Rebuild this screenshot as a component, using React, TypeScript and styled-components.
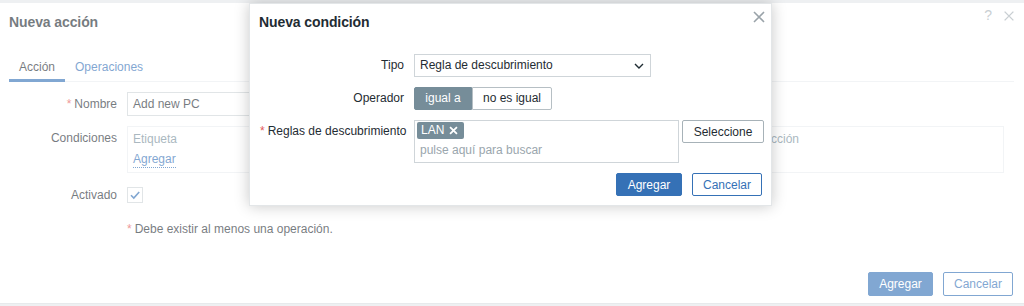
import React from 'react';
import styled, { createGlobalStyle } from 'styled-components';

const BLUE = '#3571b6';

const GlobalStyle = createGlobalStyle`
  html, body {
    margin: 0;
    padding: 0;
    background: #e4e7ea;
    font-family: "Liberation Sans", Arial, sans-serif;
    font-size: 12px;
    color: #1f2c33;
  }
`;

const Page = styled.div`
  position: relative;
  width: 1024px;
  height: 306px;
  overflow: hidden;
`;

const Dialog = styled.div`
  margin-top: 3px;
  height: 300px;
  background: #fff;
  border-bottom: 1px solid #d9dde0;
  display: flex;
  flex-direction: column;
`;

const DialogHeader = styled.div`
  height: 39px;
  display: flex;
  align-items: center;
  padding: 0 8px 0 9px;
`;

const Title = styled.h4`
  margin: 0;
  font-size: 14px;
  font-weight: bold;
  line-height: 17px;
  flex: 1;
  color: #1f2c33;
  letter-spacing: -0.1px;
`;

const HeaderIcon = styled.span<{ $gap: number; $top: number }>`
  color: #a9b2b8;
  font-size: 14px;
  margin-left: ${p => p.$gap}px;
  align-self: flex-start;
  margin-top: ${p => p.$top}px;
  display: flex;
`;

const TabList = styled.ul`
  list-style: none;
  display: flex;
  margin: 13px 10px 0 9px;
  padding: 0;
  border-bottom: 1px solid #ebeef0;
`;

const Tab = styled.li<{ $active?: boolean }>`
  padding: 5px 10px 4px;
  line-height: 15px;
  margin-bottom: -1px;
  color: ${p => (p.$active ? '#1f2c33' : BLUE)};
  border-bottom: 3px solid ${p => (p.$active ? BLUE : 'transparent')};
`;

const Form = styled.div<{ $labelWidth: number }>`
  display: grid;
  grid-template-columns: ${p => p.$labelWidth}px 1fr;
  row-gap: 10px;
  align-items: start;
`;

const OuterForm = styled(Form)`
  padding: 10px 20px 0 0;
`;

const Label = styled.label<{ $line?: number }>`
  text-align: right;
  padding-right: 10px;
  line-height: ${p => p.$line ?? 24}px;
  white-space: nowrap;
`;

const Required = styled.span`
  color: #e45959;
  margin-right: 3px;
`;

const TextInput = styled.div<{ $width: number }>`
  box-sizing: border-box;
  width: ${p => p.$width}px;
  height: 24px;
  border: 1px solid #cfd5d9;
  padding: 0 5px;
  line-height: 22px;
  background: #fff;
`;

const ConditionsBox = styled.div`
  border: 1px solid #ebeef0;
  padding: 3px 5px 4px;
`;

const ConditionsHead = styled.div`
  display: grid;
  grid-template-columns: 1fr 235px;
  line-height: 18px;
  color: #768d99;
`;

const DottedLink = styled.span`
  display: inline-block;
  margin-top: 3px;
  color: ${BLUE};
  border-bottom: 1px dotted ${BLUE};
  line-height: 16px;
`;

const CheckRow = styled.div`
  height: 24px;
  display: flex;
  align-items: center;
`;

const CheckBox = styled.span`
  box-sizing: border-box;
  width: 16px;
  height: 16px;
  border: 1px solid #cfd5d9;
  display: flex;
  align-items: center;
  justify-content: center;
`;

const Note = styled.div`
  line-height: 24px;
`;

const Footer = styled.div<{ $bottom: number }>`
  margin-top: auto;
  display: flex;
  justify-content: flex-end;
  gap: 10px;
  padding: 0 11px ${p => p.$bottom}px 0;
`;

const Button = styled.button<{ $primary?: boolean; $width: number; $height?: number }>`
  box-sizing: border-box;
  width: ${p => p.$width}px;
  height: ${p => p.$height ?? 24}px;
  font-family: inherit;
  font-size: 12px;
  padding: 0;
  border-radius: 2px;
  border: 1px solid ${BLUE};
  background: ${p => (p.$primary ? BLUE : '#fff')};
  color: ${p => (p.$primary ? '#fff' : BLUE)};
`;

const GrayButton = styled(Button)`
  border-color: #a7b2b8;
  color: #1f2c33;
`;

const Dim = styled.div`
  position: absolute;
  inset: 0;
  background: rgba(255, 255, 255, 0.38);
`;

const Modal = styled.div`
  position: absolute;
  left: 249px;
  top: 3px;
  width: 523px;
  height: 203px;
  box-sizing: border-box;
  background: #fff;
  border: 1px solid #e3e6e8;
  box-shadow: 0 0 14px rgba(0, 0, 0, 0.22);
  display: flex;
  flex-direction: column;
`;

const ModalHeader = styled.div`
  padding: 10px 10px 0 9px;
  height: 38px;
  box-sizing: border-box;
`;

const CloseButton = styled.span`
  position: absolute;
  top: 5px;
  right: 4px;
  display: flex;
`;

const ModalForm = styled(Form)`
  padding: 12px 10px 0;
`;

const Select = styled(TextInput)`
  height: 23px;
  line-height: 21px;
  display: flex;
  justify-content: space-between;
  align-items: center;
  padding-right: 6px;
`;

const RadioGroup = styled.div`
  display: flex;
  height: 23px;
`;

const Radio = styled.span<{ $checked?: boolean; $width: number }>`
  box-sizing: border-box;
  width: ${p => p.$width}px;
  height: 23px;
  line-height: 21px;
  text-align: center;
  border: 1px solid ${p => (p.$checked ? '#768d99' : '#b6bfc4')};
  background: ${p => (p.$checked ? '#768d99' : '#fff')};
  color: ${p => (p.$checked ? '#fff' : '#1f2c33')};
  border-radius: ${p => (p.$checked ? '2px 0 0 2px' : '0 2px 2px 0')};
`;

const MultiRow = styled.div`
  display: flex;
  gap: 3px;
  align-items: flex-start;
`;

const MultiSelect = styled.div`
  box-sizing: border-box;
  width: 265px;
  height: 43px;
  border: 1px solid #cfd5d9;
  padding: 1px 2px;
`;

const Tag = styled.span`
  display: inline-flex;
  align-items: center;
  gap: 4px;
  height: 17px;
  padding: 0 5px 0 4px;
  background: #768d99;
  color: #fff;
  border-radius: 2px;
  line-height: 17px;
`;

const Placeholder = styled.div`
  color: #9aa6ad;
  padding: 2px 3px 0;
  line-height: 18px;
`;

const ModalFooter = styled.div`
  margin-top: 10px;
  display: flex;
  justify-content: flex-end;
  gap: 10px;
  padding: 0 9px 0 0;
`;

const Cross = ({ size, color, width }: { size: number; color: string; width: number }) => (
  <svg width={size} height={size} viewBox="0 0 16 16">
    <path d="M3 3 L13 13 M13 3 L3 13" stroke={color} strokeWidth={width} fill="none" />
  </svg>
);

export default function App() {
  return (
    <>
      <GlobalStyle />
      <Page>
        <Dialog>
          <DialogHeader>
            <Title>Nueva acción</Title>
            <HeaderIcon $gap={12} $top={4}>?</HeaderIcon>
            <HeaderIcon $gap={10} $top={6}>
              <Cross size={14} color="#a9b2b8" width={1.6} />
            </HeaderIcon>
          </DialogHeader>
          <TabList>
            <Tab $active>Acción</Tab>
            <Tab>Operaciones</Tab>
          </TabList>
          <OuterForm $labelWidth={127}>
            <Label><Required>*</Required>Nombre</Label>
            <TextInput $width={400}>Add new PC</TextInput>

            <Label>Condiciones</Label>
            <ConditionsBox>
              <ConditionsHead>
                <span>Etiqueta</span>
                <span>Acción</span>
              </ConditionsHead>
              <DottedLink>Agregar</DottedLink>
            </ConditionsBox>

            <Label>Activado</Label>
            <CheckRow>
              <CheckBox>
                <svg width="12" height="12" viewBox="0 0 12 12">
                  <path d="M2 6.2 L4.8 9 L10.2 3" stroke={BLUE} strokeWidth="1.6" fill="none" />
                </svg>
              </CheckBox>
            </CheckRow>

            <span />
            <Note><Required>*</Required>Debe existir al menos una operación.</Note>
          </OuterForm>
          <Footer $bottom={7}>
            <Button $primary $width={65}>Agregar</Button>
            <Button $width={70}>Cancelar</Button>
          </Footer>
        </Dialog>

        <Dim />

        <Modal>
          <ModalHeader>
            <Title>Nueva condición</Title>
          </ModalHeader>
          <CloseButton>
            <Cross size={16} color="#9aa3a9" width={1.6} />
          </CloseButton>
          <ModalForm $labelWidth={154}>
            <Label $line={23}>Tipo</Label>
            <Select $width={237}>
              <span>Regla de descubrimiento</span>
              <svg width="10" height="6" viewBox="0 0 10 6">
                <path d="M1 1 L5 5 L9 1" stroke="#1f2c33" strokeWidth="1.4" fill="none" />
              </svg>
            </Select>

            <Label $line={23}>Operador</Label>
            <RadioGroup>
              <Radio $checked $width={58}>igual a</Radio>
              <Radio $width={80}>no es igual</Radio>
            </RadioGroup>

            <Label $line={23}><Required>*</Required>Reglas de descubrimiento</Label>
            <MultiRow>
              <MultiSelect>
                <Tag>
                  LAN
                  <Cross size={11} color="#fff" width={2.6} />
                </Tag>
                <Placeholder>pulse aquí para buscar</Placeholder>
              </MultiSelect>
              <GrayButton $width={82} $height={23}>Seleccione</GrayButton>
            </MultiRow>
          </ModalForm>
          <ModalFooter>
            <Button $primary $width={66} $height={23}>Agregar</Button>
            <Button $width={70} $height={23}>Cancelar</Button>
          </ModalFooter>
        </Modal>
      </Page>
    </>
  );
}
